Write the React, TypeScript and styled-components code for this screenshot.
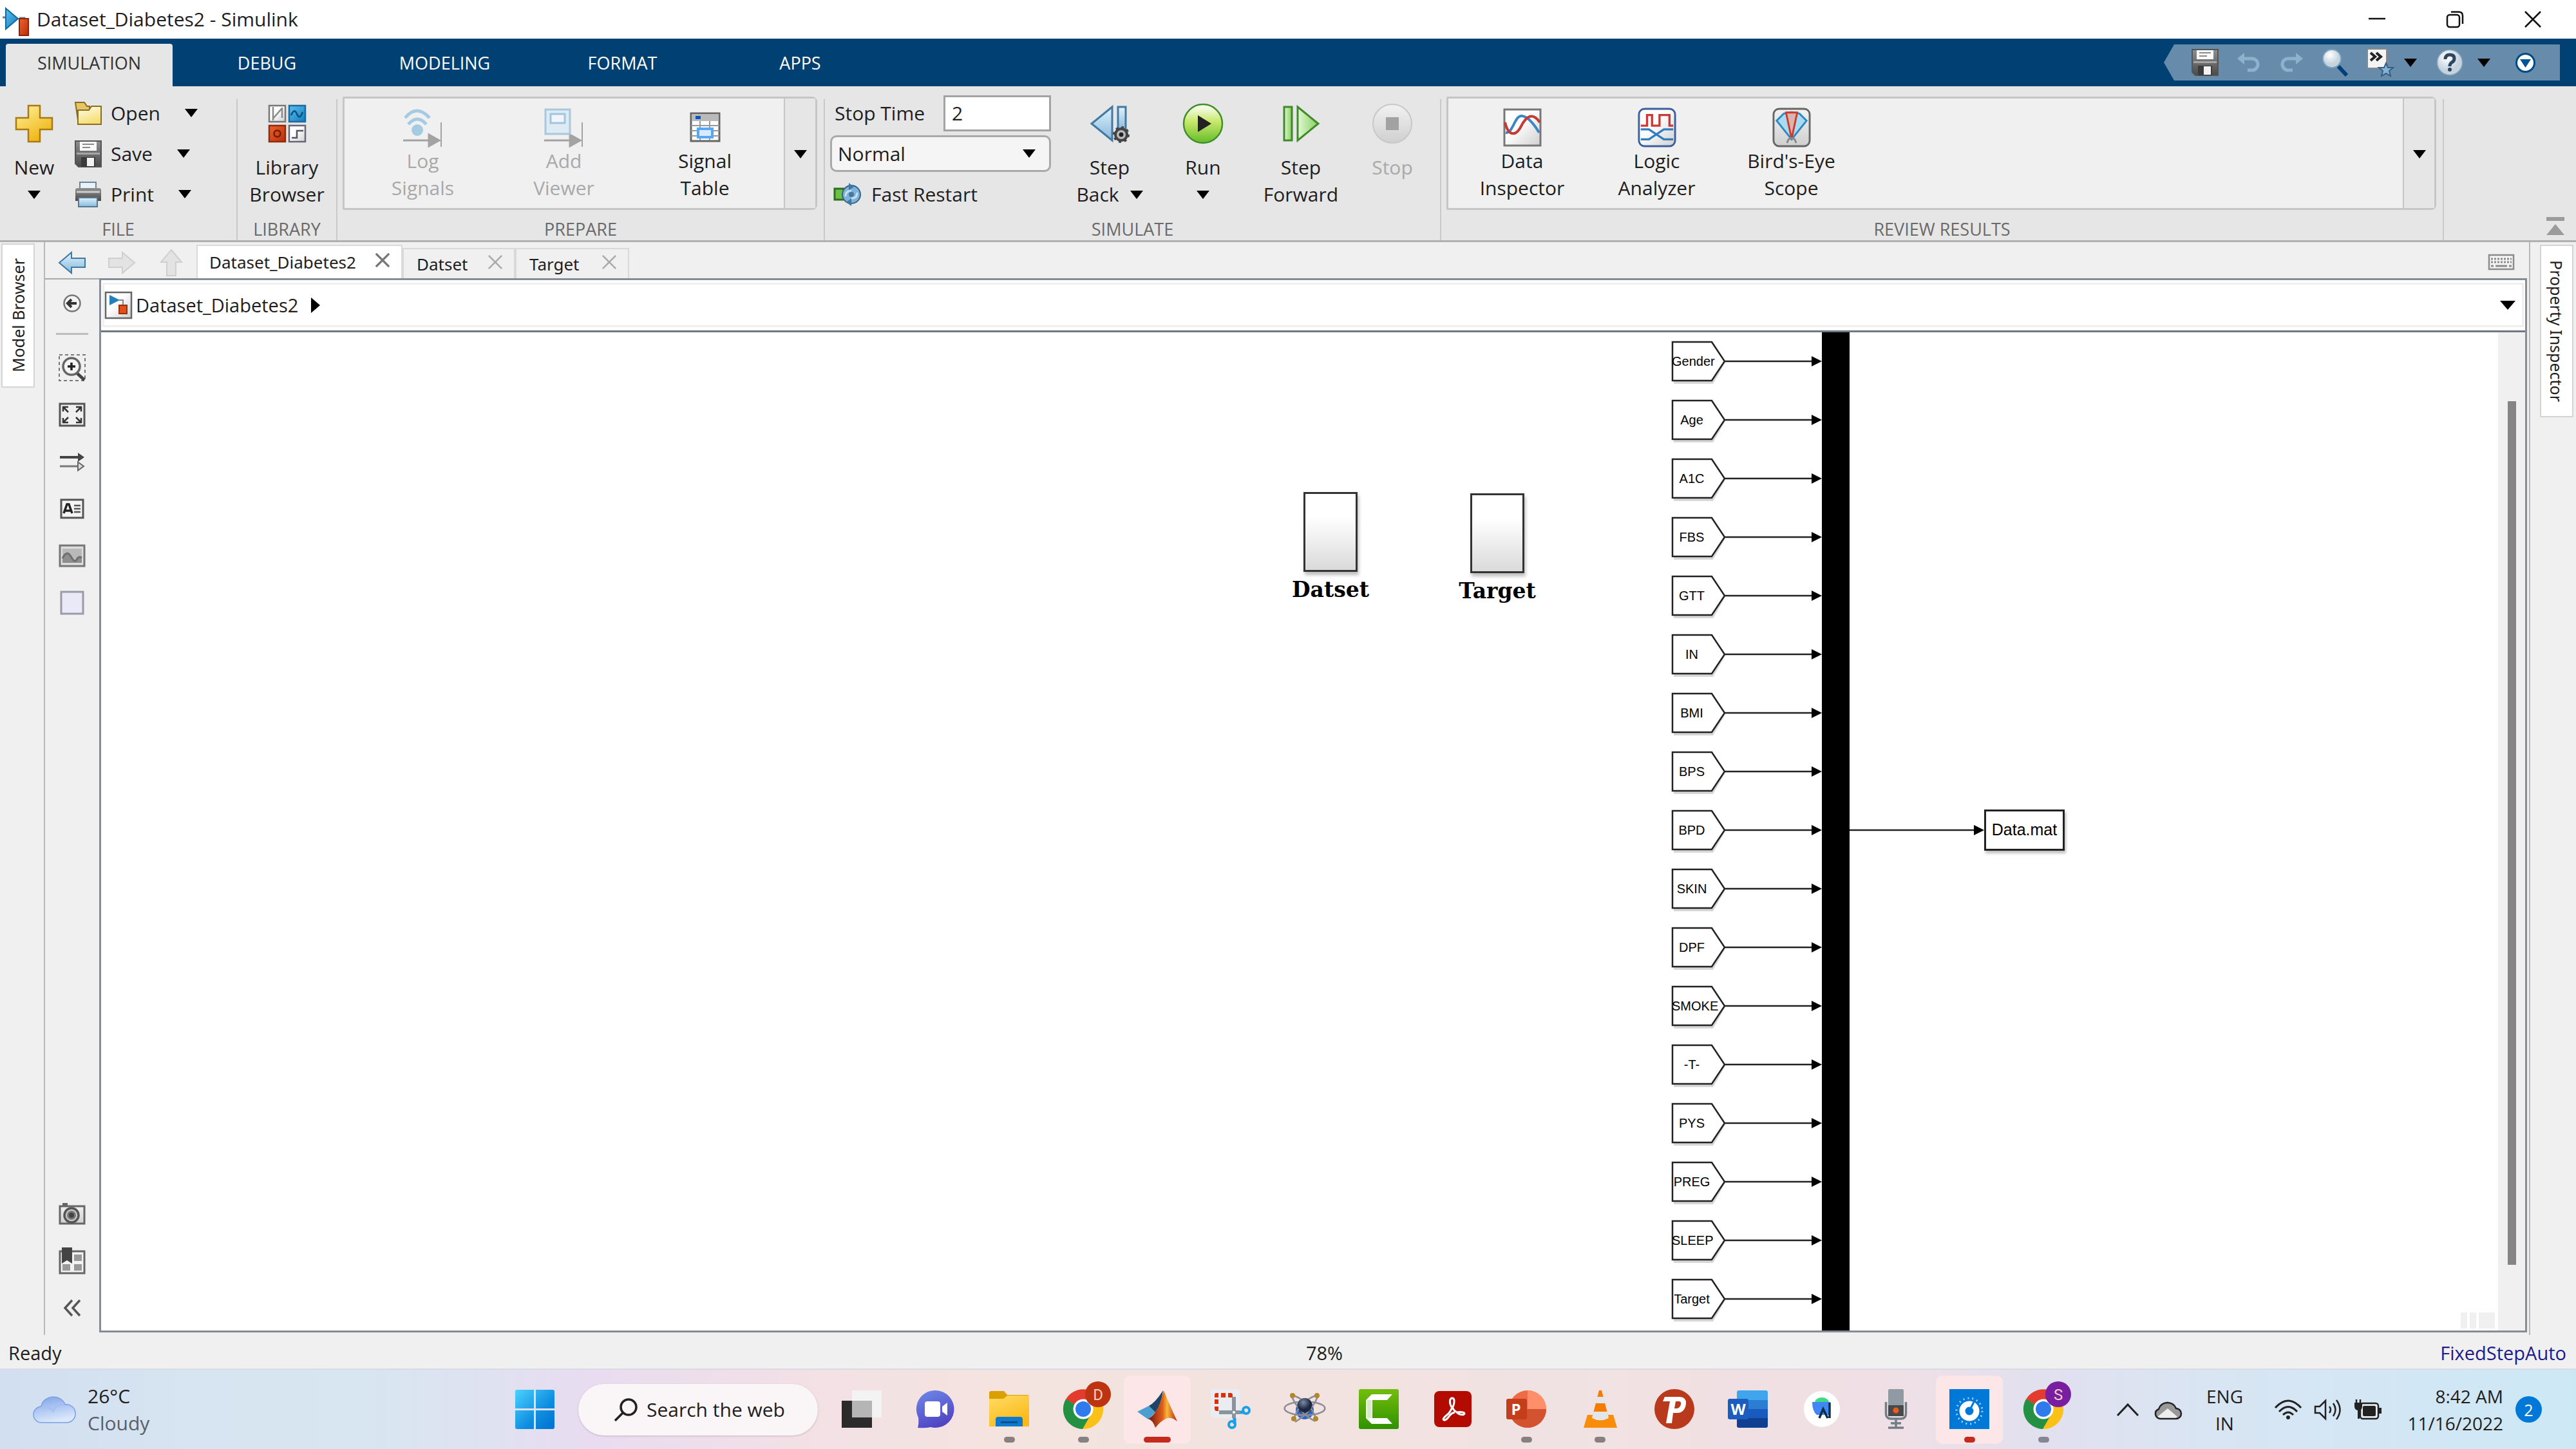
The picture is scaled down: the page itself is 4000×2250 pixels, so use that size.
import React from "react";
import styled, { createGlobalStyle, css } from "styled-components";

const UI = `"Open Sans", "Noto Sans", sans-serif`;
const TABS = `"Noto Sans", "Open Sans", sans-serif`;

const Global = createGlobalStyle`
  *, *::before, *::after { box-sizing: border-box; }
  body { margin: 0; background: #f0f0f0; font-family: ${UI}; font-size: 30px; color: #1e1e1e; }
  button, input, select { font: inherit; color: inherit; }
  button { background: none; border: 0; padding: 0; margin: 0; white-space: nowrap; }
  svg { display: block; flex: none; overflow: visible; }
`;

/* ---------- shell ---------- */

const Page = styled.div`
  display: flex;
  flex-direction: column;
  min-height: 100vh;
`;

const TitleBar = styled.header`
  display: flex;
  align-items: center;
  height: 60px;
  padding: 0 54px 0 4px;
  background: #fff;
`;

const AppTitle = styled.h1`
  flex: 1;
  margin: 0 0 0 11px;
  font-size: 30px;
  font-weight: 400;
  line-height: 40px;
`;

const WindowButtons = styled.div`
  display: flex;
  gap: 95px;
`;

const MenuBar = styled.nav`
  display: flex;
  align-items: flex-end;
  height: 74px;
  padding: 0 25px 0 9px;
  background: #004073;
`;

const MenuTabs = styled.div`
  display: flex;
  flex: 1;
  gap: 17px;
`;

const MenuTab = styled.button<{ $active?: boolean }>`
  width: 259px;
  height: 66px;
  padding-bottom: 8px;
  border-radius: 4px 4px 0 0;
  font-size: 27px;
  color: ${(p) => (p.$active ? "#333" : "#fff")};
  background: ${(p) => (p.$active ? "#e6e6e6" : "transparent")};
`;

const QuickAccess = styled.div`
  display: flex;
  align-items: center;
  align-self: center;
  height: 56px;
  padding: 0 37px 0 43px;
  background: #678cab;
  clip-path: polygon(16px 0, 100% 0, 100% 100%, 16px 100%, 0 50%);
`;

const QuickItem = styled.button<{ $gap: number }>`
  margin-right: ${(p) => p.$gap}px;
`;

/* ---------- ribbon ---------- */

const Ribbon = styled.section`
  display: flex;
  height: 242px;
  padding-top: 10px;
  background: #e6e6e6;
  border-bottom: 3px solid #b0b0b0;
`;

const Section = styled.div<{ $width?: number }>`
  display: flex;
  flex-direction: column;
  ${(p) => (p.$width ? css`width: ${p.$width}px; flex: none;` : css`flex: 1;`)}
`;

const SectionBody = styled.div`
  display: flex;
  height: 189px;
`;

const SectionLabel = styled.div`
  margin-top: 8px;
  line-height: 30px;
  font-size: 27px;
  text-align: center;
  color: #6a6a6a;
`;

const Separator = styled.div`
  flex: none;
  width: 2px;
  margin-top: 10px;
  background: #c9c9c9;
`;

const BigButton = styled.button<{ $width: number; $faded?: boolean; $inGallery?: boolean }>`
  display: flex;
  flex-direction: column;
  align-items: center;
  justify-content: flex-start;
  width: ${(p) => p.$width}px;
  flex: none;
  line-height: 42px;
  padding-top: ${(p) => (p.$inGallery ? 15 : 18)}px;
  color: ${(p) => (p.$faded ? "#a9a9a9" : "#1e1e1e")};
  & > svg { margin-bottom: ${(p) => (p.$inGallery ? 1 : 17)}px; }
`;

const ButtonLine = styled.span`
  display: flex;
  align-items: center;
  justify-content: center;
  gap: 17px;
  height: 42px;
`;

const Stack = styled.div`
  display: grid;
  grid-template-rows: repeat(3, 63px);
`;

const FileList = styled(Stack)`
  margin-left: 10px;
`;

const FileButton = styled.button`
  display: flex;
  align-items: center;
  & > span { margin: 0 38px 0 14px; }
`;

const Gallery = styled.div`
  display: flex;
  flex: 1;
  height: 176px;
  margin: 6px 10px 0 8px;
  border: 3px solid #c6c6c6;
  border-radius: 2px 8px 8px 2px;
  background: #f0f0f0;
`;

const GalleryItems = styled.div<{ $pad: number }>`
  display: flex;
  flex: 1;
  padding-left: ${(p) => p.$pad}px;
`;

const GalleryMore = styled.button`
  display: grid;
  place-items: center;
  width: 49px;
  padding-top: 3px;
  border-left: 2px solid #c6c6c6;
  background: #e6e6e6;
`;

const SimForm = styled(Stack)`
  width: 343px;
  margin: 0 14px 0 8px;
  align-items: center;
`;

const StopTimeRow = styled.div`
  display: flex;
  align-items: center;
  justify-content: space-between;
  padding-left: 7px;
`;

const StopInput = styled.input`
  width: 167px;
  height: 56px;
  padding: 0 10px;
  border: 3px solid #a3a3a3;
  border-radius: 0;
  background: #fff;
  outline: 0;
`;

const SelectBox = styled.div`
  display: grid;
  align-items: center;
  & > * { grid-area: 1 / 1; }
  & > svg { justify-self: end; margin-right: 24px; pointer-events: none; }
`;

const ModeSelect = styled.select`
  appearance: none;
  height: 57px;
  padding: 0 9px;
  border: 3px solid #a9a9a9;
  border-radius: 10px;
  background: #f5f5f5;
`;

const FastRestart = styled.button`
  display: flex;
  align-items: center;
  gap: 16px;
  padding-left: 6px;
`;

const RibbonEnd = styled.div`
  display: flex;
  align-items: flex-end;
  justify-content: flex-end;
  width: 205px;
  padding: 0 18px 7px 0;
`;

/* ---------- workspace ---------- */

const Workspace = styled.main`
  display: flex;
  flex: 1;
  background: #f0f0f0;
`;

const LeftRail = styled.aside`
  width: 70px;
  padding: 2px 0 0 2px;
  border-right: 2px solid #b9b9b9;
`;

const RightRail = styled.aside`
  width: 73px;
  padding: 4px 0 0 15px;
  border-left: 2px solid #b9b9b9;
`;

const SideTab = styled.button<{ $flip?: boolean; $length: number }>`
  width: 52px;
  height: ${(p) => p.$length}px;
  border: 2px solid #d4d4d4;
  background: #fff;
  font-family: ${TABS};
  font-size: 25px;
  line-height: 34px;
  writing-mode: vertical-rl;
  transform: ${(p) => (p.$flip ? "rotate(180deg)" : "none")};
`;

const Center = styled.div`
  display: flex;
  flex-direction: column;
  flex: 1;
  min-width: 0;
`;

const DocBar = styled.div`
  display: flex;
  align-items: flex-end;
  height: 56px;
  padding-right: 23px;
`;

const NavButtons = styled.div`
  display: flex;
  align-self: center;
  align-items: center;
  gap: 35px;
  width: 235px;
  padding: 8px 0 0 21px;
`;

const DocTab = styled.div<{ $active?: boolean; $width: number }>`
  display: flex;
  align-items: center;
  justify-content: space-between;
  width: ${(p) => p.$width}px;
  height: ${(p) => (p.$active ? 52 : 47)}px;
  padding: ${(p) => (p.$active ? "0 18px 0 18px" : "0 18px 0 20px")};
  border: 2px solid #d9d9d9;
  border-bottom: 0;
  background: ${(p) => (p.$active ? "#fff" : "#f0f0f0")};
  font-family: ${TABS};
  font-size: 26px;
  & > button:last-child { margin-bottom: 6px; }
`;

const DocFill = styled.div`
  flex: 1;
`;

const KeyboardButton = styled.button`
  align-self: center;
  margin-top: 6px;
`;

const EditorRow = styled.div`
  display: flex;
  flex: 1;
`;

const Palette = styled.div`
  display: flex;
  flex-direction: column;
  align-items: center;
  width: 84px;
  padding-bottom: 6px;
  border-top: 2px solid #a8a8a8;
`;

const PaletteButton = styled.button`
  display: grid;
  place-items: center;
  width: 56px;
  height: 73px;
`;

const PaletteRule = styled.div`
  width: 50px;
  height: 3px;
  margin: 10px 0 14px;
  background: #bdbdbd;
`;

const PaletteGap = styled.div`
  flex: 1;
`;

const Editor = styled.div`
  display: flex;
  flex-direction: column;
  flex: 1;
  margin: 0 3px 4px 0;
  border: 3px solid #868d97;
  background: #fff;
`;

const Crumbs = styled.div`
  display: flex;
  align-items: center;
  height: 81px;
  padding: 4px 2px 5px;
  border-bottom: 3px solid #6f7884;
`;

const CrumbInner = styled.div`
  display: flex;
  align-items: center;
  flex: 1;
  height: 69px;
  padding: 0 10px 0 1px;
  border: 3px solid #efefef;
`;

const CrumbName = styled.button`
  margin: 0 20px 0 6px;
  font-size: 29px;
`;

const CanvasRow = styled.div`
  display: flex;
  flex: 1;
`;

const Canvas = styled.div`
  position: relative;
  flex: 1;
  overflow: hidden;
  background: #fff;
`;

const ScrollTrack = styled.div`
  display: flex;
  justify-content: center;
  width: 42px;
  padding: 107px 0 102px;
  background: #f0f0f0;
`;

const ScrollThumb = styled.div`
  width: 13px;
  background: #858585;
`;

const CanvasCorner = styled.div`
  position: absolute;
  right: 5px;
  bottom: 3px;
  display: flex;
  gap: 4px;
  height: 25px;
`;

const CornerBar = styled.div<{ $width: number }>`
  width: ${(p) => p.$width}px;
  background: #f0f0f0;
`;

/* ---------- diagram nodes ---------- */

const Subsystem = styled.div<{ $x: number; $y: number }>`
  position: absolute;
  left: ${(p) => p.$x}px;
  top: ${(p) => p.$y}px;
  display: flex;
  flex-direction: column;
  align-items: center;
  width: 144px;
  font: bold 33px/40px "DejaVu Serif", serif;
  color: #000;
`;

const SubsystemBox = styled.div`
  width: 84px;
  height: 124px;
  margin-bottom: 8px;
  border: 3px solid #333;
  background: linear-gradient(#fff 30%, #dadada);
  box-shadow: 2px 5px 5px rgba(0, 0, 0, 0.25);
`;

const FromColumn = styled.div`
  position: absolute;
  left: 2439px;
  top: 14px;
  display: flex;
  flex-direction: column;
  gap: 29px;
`;

const FromRow = styled.div`
  display: flex;
  align-items: center;
  height: 62px;
`;

const Tag = styled.div`
  display: grid;
  align-items: center;
  width: 83px;
  font: 20px/24px "Liberation Sans", Arial, sans-serif;
  color: #000;
  & > * { grid-area: 1 / 1; }
  & > span { justify-self: start; min-width: 62px; text-align: center; white-space: nowrap; }
`;

const Mux = styled.div`
  position: absolute;
  left: 2672px;
  top: 0;
  bottom: 0;
  width: 43px;
  background: #000;
`;

const Output = styled.div`
  position: absolute;
  left: 2715px;
  top: 741px;
  display: flex;
  align-items: center;
`;

const FileBlock = styled.div`
  width: 125px;
  height: 64px;
  border: 3px solid #222;
  background: #fff;
  box-shadow: 2px 4px 4px rgba(0, 0, 0, 0.25);
  font: 25px/56px "Liberation Sans", Arial, sans-serif;
  text-align: center;
  color: #000;
`;

/* ---------- bottom bars ---------- */

const StatusBar = styled.footer`
  display: grid;
  grid-template-columns: 1fr auto 1fr;
  align-items: center;
  height: 52px;
  padding: 2px 15px 0 13px;
  font-size: 29px;
  & > span:nth-child(2) { margin-left: 115px; }
`;

const SolverLink = styled.a`
  justify-self: end;
  color: #1c1c8c;
  text-decoration: none;
`;

const Taskbar = styled.footer`
  display: flex;
  align-items: center;
  height: 125px;
  padding: 0 53px;
  border-top: 2px solid #d9dbe4;
  background: linear-gradient(90deg, #d2dff0 0, #d7e4f1 8%, #d7e6f1 14%, #dfe2f0 19%, #e9dcf0 23%, #f2e0e6 31%, #f4e3df 38%, #f3e3df 46%, #f0e2e2 60%, #f1e0e3 68%, #efe0e6 74%, #e2e0ef 79%, #d8e5f3 86%, #cde8f5 100%);
`;

const Weather = styled.button`
  display: flex;
  align-items: center;
  gap: 19px;
  flex: none;
  width: 747px;
  text-align: left;
  line-height: 42px;
`;

const Muted = styled.span`
  color: #5b6068;
`;

const Lines = styled.span<{ $align?: string }>`
  display: flex;
  flex-direction: column;
  align-items: ${(p) => p.$align ?? "flex-start"};
`;

const SearchPill = styled.button`
  display: flex;
  align-items: center;
  gap: 14px;
  flex: none;
  width: 372px;
  height: 80px;
  margin: 0 16px 0 37px;
  padding-left: 56px;
  border-radius: 40px;
  background: #faf6f8;
  box-shadow: 0 1px 3px rgba(120, 90, 110, 0.3);
`;

const Dock = styled.div`
  display: flex;
  justify-content: space-between;
  flex: 1;
`;

const DockItem = styled.button<{ $lit?: boolean }>`
  display: grid;
  grid-template-rows: 86px 9px;
  place-items: center;
  align-content: start;
  width: 104px;
  height: 106px;
  padding-top: 9px;
  border-radius: 10px;
  background: ${(p) => (p.$lit ? "#fde6e8" : "transparent")};
`;

const Indicator = styled.span<{ $color: string; $wide?: boolean }>`
  width: ${(p) => (p.$wide ? 42 : 17)}px;
  height: 9px;
  border-radius: 5px;
  background: ${(p) => p.$color};
`;

const Tray = styled.div`
  display: flex;
  align-items: center;
  flex: none;
  width: 722px;
  padding-left: 62px;
  font-size: 28px;
  line-height: 42px;
`;

const TrayButton = styled.button<{ $left: number }>`
  display: flex;
  align-items: center;
  margin-left: ${(p) => p.$left}px;
`;

const Clock = styled(TrayButton)`
  flex: 1;
  justify-content: flex-end;
  gap: 19px;
`;

const Count = styled.span`
  display: grid;
  place-items: center;
  width: 41px;
  height: 41px;
  border-radius: 50%;
  background: #0078d7;
  color: #fff;
  font-size: 25px;
`;

/* ---------- icons ---------- */

const Arrow = ({ w = 20, h = 13, fill = "#000" }: { w?: number; h?: number; fill?: string }) => (
  <svg width={w} height={h} viewBox="0 0 20 13" preserveAspectRatio="none"><path d="M0 0h20L10 13z" fill={fill} /></svg>
);

const HiddenDefs = styled.svg`
  position: absolute;
`;

const Defs = () => (
  <HiddenDefs width="0" height="0" aria-hidden="true">
    <defs>
      <linearGradient id="gold" x2="0.6" y2="1"><stop stopColor="#fff3a0" /><stop offset="1" stopColor="#eeb411" /></linearGradient>
      <linearGradient id="folder" x2="0.4" y2="1"><stop stopColor="#fffdf0" /><stop offset="1" stopColor="#f5df72" /></linearGradient>
      <linearGradient id="steel" x2="0" y2="1"><stop stopColor="#8f8f8f" /><stop offset="1" stopColor="#4a4a4a" /></linearGradient>
      <linearGradient id="paper" x2="1" y2="1"><stop offset=".4" stopColor="#fff" /><stop offset="1" stopColor="#cfcfcf" /></linearGradient>
      <linearGradient id="blue" x2="1" y2="1"><stop stopColor="#5cc0ee" /><stop offset="1" stopColor="#117bbd" /></linearGradient>
      <linearGradient id="red" x2="1" y2="1"><stop stopColor="#f0612e" /><stop offset="1" stopColor="#b82f08" /></linearGradient>
      <linearGradient id="sky" x2="0" y2="1"><stop stopColor="#e0f2fc" /><stop offset="1" stopColor="#86b9dc" /></linearGradient>
      <linearGradient id="run" x2="0" y2="1"><stop stopColor="#fff" /><stop offset=".45" stopColor="#c8e86a" /><stop offset="1" stopColor="#63bb2a" /></linearGradient>
      <linearGradient id="leaf" x2="1" y2="0"><stop stopColor="#e2f7d4" /><stop offset="1" stopColor="#85d05c" /></linearGradient>
      <linearGradient id="pale" x2="0" y2="1"><stop stopColor="#f2f2f2" /><stop offset="1" stopColor="#cfcfcf" /></linearGradient>
      <linearGradient id="win" x2="1" y2="1"><stop stopColor="#4cd2ff" /><stop offset=".6" stopColor="#0f8ee0" /><stop offset="1" stopColor="#0070d0" /></linearGradient>
      <linearGradient id="cloud" x2="0.3" y2="1"><stop stopColor="#7da2ea" /><stop offset="1" stopColor="#dbe8fb" /></linearGradient>
      <linearGradient id="chat" x2="0.4" y2="1"><stop stopColor="#6f8be8" /><stop offset="1" stopColor="#5146c4" /></linearGradient>
      <linearGradient id="fold" x2="0.6" y2="1"><stop stopColor="#ffdc66" /><stop offset="1" stopColor="#fbb917" /></linearGradient>
      <linearGradient id="cam" x2="0" y2="1"><stop stopColor="#74bd0c" /><stop offset="1" stopColor="#2f9200" /></linearGradient>
      <linearGradient id="mat" x2="1" y2="0"><stop stopColor="#6d1410" /><stop offset=".5" stopColor="#e2601c" /><stop offset=".65" stopColor="#f6b83a" /><stop offset="1" stopColor="#b8230f" /></linearGradient>
      <radialGradient id="ball" cx=".4" cy=".3"><stop stopColor="#fff" /><stop offset="1" stopColor="#c5d3df" /></radialGradient>
      <radialGradient id="atomball" cx=".4" cy=".3"><stop stopColor="#7c8ba8" /><stop offset="1" stopColor="#1c2740" /></radialGradient>
    </defs>
  </HiddenDefs>
);

const SimulinkMark = () => (
  <svg width="42" height="54" viewBox="0 0 42 54"><path d="M0 24h8M26 25h8v17" stroke="#777" strokeWidth="3" fill="none" /><path d="M5 10l19 16L5 42z" fill="url(#blue)" stroke="#1468a0" strokeWidth="2" /><path d="M26 44h14v26H26z" transform="translate(0 -18)" fill="url(#red)" stroke="#8c2408" strokeWidth="2" transform-origin="0 0" /></svg>
);
const Minimize = () => <svg width="26" height="26" viewBox="0 0 26 26"><path d="M0 12h26" stroke="#111" strokeWidth="2.5" /></svg>;
const Restore = () => <svg width="26" height="26" viewBox="0 0 26 26" fill="none" stroke="#111" strokeWidth="2.5"><rect x="1" y="6" width="19" height="19" rx="4" /><path d="M7 1.500h12q6 0 6 6V20" /></svg>;
const Close = ({ size = 26, color = "#111", sw = 2.5 }) => <svg width={size} height={size} viewBox="0 0 26 26"><path d="M1 1l24 24M25 1L1 25" stroke={color} strokeWidth={sw} /></svg>;
const Floppy = () => (
  <svg width="42" height="42" viewBox="0 0 42 42"><path d="M1 1h40v40H6l-5-5z" fill="url(#steel)" stroke="#555" strokeWidth="2" /><path d="M8 2h26v14H8z" fill="#fafafa" /><path d="M12 6h18M12 11h12" stroke="#8a8a8a" strokeWidth="2" /><path d="M10 26h22v15H10z" fill="#3b3b3b" /><path d="M19 27h11v13H19z" fill="#f2f2f2" /><path d="M3 19h36v3H3z" fill="#a5a5a5" /></svg>
);
const Undo = ({ flip = false }) => (
  <svg width="38" height="34" viewBox="0 0 38 34"><g transform={flip ? "translate(38 0) scale(-1 1)" : undefined}><path d="M8 11h16a9 9 0 0 1 0 18h-7" fill="none" stroke="#8fb2cc" strokeWidth="5" /><path d="M1 11L12 2v18z" fill="#8fb2cc" /></g></svg>
);
const Magnifier = () => <svg width="42" height="44" viewBox="0 0 42 44"><path d="M26 28l13 14" stroke="#003f78" strokeWidth="6" /><circle cx="16" cy="16" r="14" fill="url(#ball)" stroke="#7fa2bd" strokeWidth="2" /></svg>;
const Favorites = () => (
  <svg width="42" height="44" viewBox="0 0 42 44"><path d="M1 1h30v30H1z" fill="#f4f4f4" stroke="#888" strokeWidth="2" /><path d="M6 7l7 6-7 6M15 7l7 6-7 6" fill="none" stroke="#222" strokeWidth="4" /><path d="M30 23l3 7h8l-6 5 2 8-7-4-7 4 2-8-6-5h8z" fill="#7fb3d8" stroke="#385d7e" strokeWidth="2" /></svg>
);
const Help = () => (
  <svg width="42" height="42" viewBox="0 0 42 42"><circle cx="21" cy="21" r="19.500" fill="url(#ball)" stroke="#8aa4b8" strokeWidth="1.500" /><path d="M14 16q0-7 7-7t7 6q0 4-4 6-3 2-3 6" fill="none" stroke="#2d4560" strokeWidth="5" /><circle cx="21" cy="32" r="3" fill="#2d4560" /></svg>
);
const CircleDown = () => <svg width="33" height="33" viewBox="0 0 33 33"><circle cx="16.500" cy="16.500" r="14" fill="#fff" stroke="#004b85" strokeWidth="3" /><path d="M8 11h17l-8.500 13z" fill="#00559a" /></svg>;

const Plus = () => <svg width="60" height="60" viewBox="0 0 60 60"><path d="M21 2h18v19h19v18H39v19H21V39H2V21h19z" fill="url(#gold)" stroke="#a97912" strokeWidth="2.500" /></svg>;
const Folder = () => <svg width="42" height="38" viewBox="0 0 42 38"><path d="M1 2h14l4 6h4v6H6v22z" fill="#e5c564" stroke="#8c6d1e" strokeWidth="2" /><path d="M5 36V14h17l4-6h15v28z" fill="url(#folder)" stroke="#8c6d1e" strokeWidth="2" /></svg>;
const Printer = () => (
  <svg width="42" height="42" viewBox="0 0 42 42"><path d="M8 2h25v14H8z" fill="#e9f2fa" stroke="#6e8598" strokeWidth="2" /><path d="M1 14q0-3 4-3h32q4 0 4 3v17H1z" fill="url(#steel)" /><path d="M3 17h36" stroke="#ccc" strokeWidth="3" /><path d="M6 26h29v14H6z" fill="url(#sky)" stroke="#587690" strokeWidth="2" /></svg>
);
const Library = () => (
  <svg width="60" height="60" viewBox="0 0 60 60" strokeWidth="2.500"><path d="M2 2h25v25H2z" fill="url(#paper)" stroke="#777" /><path d="M33 2h25v25H33z" fill="url(#blue)" stroke="#1a6a9c" /><path d="M2 33h25v25H2z" fill="url(#red)" stroke="#922b0a" /><path d="M33 33h25v25H33z" fill="url(#paper)" stroke="#667" /><path d="M8 4v21M8 22L22 6M22 5v16" stroke="#8a8a8a" fill="none" /><path d="M36 17q5-12 9-2t9-3" stroke="#0b507c" fill="none" /><circle cx="14.500" cy="45.500" r="5" fill="none" stroke="#711d04" /><path d="M37 52h8V41h10" fill="none" stroke="#556" /></svg>
);
const SinkArrow = () => <g fill="#a3a3a3" stroke="#a3a3a3" strokeWidth="3"><path d="M0 50h42" /><path d="M40 41l16 9-16 9z" /><path d="M59 22v38" strokeWidth="2" /></g>;
const LogSignals = () => <svg width="62" height="60" viewBox="0 0 62 60"><SinkArrow /><g fill="none" stroke="#a5cbe2" strokeWidth="5"><path d="M3 15q18-22 38 0" /><path d="M8 25q14-16 28 0" /></g><circle cx="22" cy="34" r="9" fill="#a5cbe2" /></svg>;
const AddViewer = () => <svg width="62" height="60" viewBox="0 0 62 60"><SinkArrow /><path d="M2 2h38v38H2z" fill="#deebf4" stroke="#a9c7dc" strokeWidth="3" /><path d="M10 9h22v14H10z" fill="#f0f6fb" stroke="#9fc5e0" strokeWidth="3" /></svg>;
const SignalTable = () => (
  <svg width="48" height="60" viewBox="0 0 48 60"><path d="M2 8h44v43H2z" fill="#fff" stroke="#666" strokeWidth="3" /><path d="M3 9h42v11H3z" fill="#b9b9b9" /><path d="M9 12h8v5H9z" fill="#0b55c2" /><path d="M2 27h44M2 35h44M2 43h44M16 20v30M31 20v30" stroke="#999" strokeWidth="2" /><path d="M13 32h22v13H13z" fill="#d9ecff" stroke="#56a8f7" strokeWidth="4" /></svg>
);
const Restart = () => (
  <svg width="42" height="34" viewBox="0 0 42 34"><path d="M1 8h14v17H1z" fill="#6cc04a" stroke="#2d6e1c" strokeWidth="3" /><circle cx="27" cy="17" r="14" fill="#7fb2d6" stroke="#34648a" strokeWidth="2" /><path d="M23-1l8 6-8 6zM27 35l-8-6 8-6z" fill="#3c79a8" /><path d="M18 20q0-9 9-9M36 14q0 9-9 9" fill="none" stroke="#c3e0f2" strokeWidth="3" /><circle cx="27" cy="17" r="4" fill="#46789e" /></svg>
);
const StepBack = () => (
  <svg width="60" height="60" viewBox="0 0 60 60"><path d="M34 4v52L2 30z" fill="url(#sky)" stroke="#4179a3" strokeWidth="3" /><path d="M43 4h12v36H43z" fill="url(#sky)" stroke="#4179a3" strokeWidth="3" /><circle cx="48" cy="47" r="9" fill="#bbb" stroke="#444" strokeWidth="4" /><circle cx="48" cy="47" r="11.500" fill="none" stroke="#444" strokeWidth="3" strokeDasharray="4 5" /><circle cx="48" cy="47" r="3.500" fill="#222" /></svg>
);
const Run = () => <svg width="62" height="60" viewBox="0 0 62 60"><circle cx="31" cy="30" r="30" fill="url(#run)" stroke="#3f8f2a" strokeWidth="2.500" /><path d="M23 17l21 13-21 13z" fill="#222" /></svg>;
const StepForward = () => <svg width="60" height="60" viewBox="0 0 60 60"><g fill="url(#leaf)" stroke="#418a2c" strokeWidth="3"><path d="M4 4h12v52H4z" /><path d="M25 4v52l32-26z" /></g></svg>;
const Stop = () => <svg width="62" height="60" viewBox="0 0 62 60"><circle cx="31" cy="30" r="30" fill="url(#pale)" stroke="#c8c8c8" strokeWidth="2" /><path d="M21 20h20v20H21z" fill="#a2a2a2" /></svg>;
const DataInspector = () => <svg width="60" height="60" viewBox="0 0 60 60"><path d="M2 2h56v56H2z" fill="url(#paper)" stroke="#777" strokeWidth="3" /><path d="M4 38C15 40 18 11 29 12S50 28 56 38" fill="none" stroke="#3d85c4" strokeWidth="4" /><path d="M3 22C8 44 20 44 28 28S46 6 57 22" fill="none" stroke="#c63a34" strokeWidth="4" /></svg>;
const LogicAnalyzer = () => (
  <svg width="62" height="60" viewBox="0 0 62 62"><rect x="2" y="1" width="58" height="60" rx="9" fill="url(#paper)" stroke="#3d5f9c" strokeWidth="3" /><path d="M5 28h10V11h8v17h12V11h16v17h6" fill="none" stroke="#cc3a36" strokeWidth="3.500" /><path d="M5 34h13l24 16h15M5 50h13l24-16h15" fill="none" stroke="#2f7fc0" strokeWidth="3.500" /></svg>
);
const BirdsEye = () => (
  <svg width="62" height="60" viewBox="0 0 62 62"><rect x="2" y="1" width="58" height="60" rx="9" fill="url(#pale)" stroke="#666" strokeWidth="3" /><path d="M31 50L7 20 18 9q13-5 26 0l11 11z" fill="#a8dcf2" stroke="#2f88c0" strokeWidth="3" /><path d="M22 7h18l-9 42z" fill="#d9b5ac" stroke="#cf3a30" strokeWidth="3" /><path d="M24 56q1-8 7-8t7 8" fill="none" stroke="#888" strokeWidth="3" /></svg>
);
const Collapse = () => <svg width="28" height="30" viewBox="0 0 28 30"><path d="M0 1h28v6H0zM14 12l14 17H0z" fill="#9b9b9b" /></svg>;

const NavArrow = ({ turn, live = false }: { turn: number; live?: boolean }) => (
  <svg width="42" height="34" viewBox="0 0 42 34"><path d="M1 17L20 1v9h21v14H20v9z" transform={`rotate(${turn} 21 17)`} fill={live ? "url(#sky)" : "#e3e3e3"} stroke={live ? "#3f78a0" : "#cfcfcf"} strokeWidth="2" /></svg>
);
const Keyboard = () => <svg width="40" height="24" viewBox="0 0 40 24"><path d="M1 1h38v22H1z" fill="#f4f4f4" stroke="#8b8b8b" strokeWidth="2.500" /><path d="M4 7h32M4 12h32" stroke="#8b8b8b" strokeWidth="3" strokeDasharray="3 2" /><path d="M4 18h4M11 18h18M32 18h4" stroke="#8b8b8b" strokeWidth="3" /></svg>;
const ModelIcon = () => <svg width="42" height="42" viewBox="0 0 42 42"><path d="M1 1h40v40H1z" fill="url(#paper)" stroke="#666" strokeWidth="2.500" /><path d="M22 13h6v9" stroke="#888" strokeWidth="2" fill="none" /><path d="M7 5l16 8L7 21z" fill="#2380bd" /><path d="M22 21h12v13H22z" fill="#e0501c" stroke="#98300b" strokeWidth="2" /></svg>;
const HideBar = () => <svg width="28" height="28" viewBox="0 0 28 28"><circle cx="14" cy="14" r="12.500" fill="#f3f3f3" stroke="#777" strokeWidth="2.500" /><path d="M21 14H8M13 8l-6 6 6 6" fill="none" stroke="#333" strokeWidth="4" /></svg>;
const ZoomIn = () => (
  <svg width="42" height="42" viewBox="0 0 42 42"><path d="M1 1h40v40H1z" fill="none" stroke="#777" strokeWidth="2" strokeDasharray="5 4" /><path d="M28 29l12 11" stroke="#444" strokeWidth="5" /><circle cx="20" cy="19" r="13" fill="#f5f5f5" stroke="#666" strokeWidth="3.500" /><path d="M20 13v12M14 19h12" stroke="#222" strokeWidth="3.500" /></svg>
);
const Fit = () => (
  <svg width="42" height="38" viewBox="0 0 42 38"><path d="M2 2h38v34H2z" fill="#f0f0f0" stroke="#555" strokeWidth="3" /><g stroke="#333" strokeWidth="2.500" fill="none"><path d="M7 14V7h8M7 7l8 8M27 7h8v7M35 7l-8 8M7 24v7h8M7 31l8-8M27 31h8v-7M35 31l-8-8" /></g></svg>
);
const SignalLines = () => <svg width="38" height="28" viewBox="0 0 38 28"><path d="M0 7h31" stroke="#444" strokeWidth="4" /><path d="M0 21h31" stroke="#777" strokeWidth="3" /><path d="M28 0l10 7-10 7z" fill="#444" /><path d="M28 14.500l9 6.500-9 6.500z" fill="#ddd" stroke="#666" strokeWidth="2" /></svg>;
const Annotation = () => <svg width="38" height="32" viewBox="0 0 38 32"><path d="M2 2h34v28H2z" fill="#f4f4f4" stroke="#555" strokeWidth="3" /><path d="M6 23L11 9h3l5 14M8 19h9" fill="none" stroke="#222" strokeWidth="3.500" /><path d="M22 11h10M22 16h10M22 21h10" stroke="#555" strokeWidth="2.500" /></svg>;
const ImageIcon = () => <svg width="42" height="36" viewBox="0 0 42 36"><path d="M2 2h38v32H2z" fill="#ddd" stroke="#777" strokeWidth="3" /><path d="M6 7h30v22H6z" fill="#b9b9b9" /><path d="M6 22q7-14 13-3t9 5 8-3v8H6z" fill="#8e8e8e" /><path d="M6 22q7-14 13-3t9 5 8-3" fill="none" stroke="#6f6f6f" strokeWidth="3" /></svg>;
const Area = () => <svg width="38" height="38" viewBox="0 0 38 38"><path d="M2 2h34v34H2z" fill="#e9e9f8" stroke="#9a9aa8" strokeWidth="3" /></svg>;
const Camera = () => <svg width="42" height="34" viewBox="0 0 42 34"><path d="M2 5h38v27H2z" fill="url(#pale)" stroke="#666" strokeWidth="3" /><path d="M6 0h8v5H6z" fill="#666" /><circle cx="20" cy="19" r="11" fill="#c9c9c9" stroke="#555" strokeWidth="3.500" /><circle cx="20" cy="19" r="5.500" fill="#444" stroke="#777" strokeWidth="3" /></svg>;
const Bookmark = () => <svg width="42" height="42" viewBox="0 0 42 42"><path d="M2 6h38v34H2z" fill="#f2f2f2" stroke="#666" strokeWidth="3" /><path d="M24 11h12v10H24zM24 26h12v10H24zM6 26h12v10H6z" fill="#999" /><path d="M5 0h16v25l-8-5-8 5z" fill="#444" /></svg>;
const Chevrons = () => <svg width="28" height="26" viewBox="0 0 28 26" fill="none" stroke="#555" strokeWidth="3.500"><path d="M14 1L3 13l11 12M26 1L15 13l11 12" /></svg>;

const TagShape = () => <svg width="83" height="62" viewBox="0 0 83 62"><path d="M3 5h60l20 28-19 33H3z" fill="#000" opacity=".16" /><path d="M1 1h61l20 30-20 30H1z" fill="#fff" stroke="#222" strokeWidth="2.500" /></svg>;
const Wire = ({ length }: { length: number }) => <svg width={length} height="16" viewBox={`0 0 ${length} 16`}><path d={`M0 8h${length - 12}`} stroke="#222" strokeWidth="2.500" /><path d={`M${length - 16} 0l16 8-16 8z`} fill="#000" /></svg>;

/* ---------- taskbar icons ---------- */

const Cloud = () => <svg width="64" height="42" viewBox="0 0 64 42"><path d="M12 41a12 12 0 0 1-1-25 19 17 0 0 1 37-3 14 14 0 0 1 4 28z" fill="url(#cloud)" stroke="#7c9fe6" strokeWidth="1.500" /><path d="M12 19q10-4 18 4 3-10 16-10" fill="none" stroke="#a6c0f2" strokeWidth="3" /></svg>;
const Windows = () => <svg width="61" height="61" viewBox="0 0 61 61"><path d="M3 0h26v29H0V3q0-3 3-3zM32 0h26q3 0 3 3v26H32zM0 32h29v29H3q-3 0-3-3zM32 32h29v26q0 3-3 3H32z" fill="url(#win)" /></svg>;
const SearchGlass = () => <svg width="36" height="36" viewBox="0 0 36 36" fill="none" stroke="#222" strokeWidth="3.500"><circle cx="22" cy="14" r="12" /><path d="M13 23L1 35" /></svg>;
const TaskView = () => <svg width="62" height="60" viewBox="0 0 62 60"><path d="M0 17h47v42H0z" fill="#2b2b2b" /><path d="M16 1h46v42H16z" fill="#f3f3f3" /><path d="M16 17h31v26H16z" fill="#b5b5b5" /></svg>;
const Chat = () => <svg width="60" height="60" viewBox="0 0 60 60"><path d="M30 1a29 29 0 1 1-8 57q-8 2-20 1 2-6 1-16A29 29 0 0 1 30 1z" fill="url(#chat)" /><rect x="13" y="18" width="24" height="24" rx="4" fill="#fff" /><path d="M40 26l8-6v20l-8-6z" fill="#fff" /></svg>;
const Explorer = () => <svg width="62" height="56" viewBox="0 0 62 56"><path d="M0 3q0-3 3-3h20l5 6h31q3 0 3 3v10H0z" fill="#dba000" /><path d="M0 12h22l6-5h34v48H0z" fill="url(#fold)" /><path d="M10 55V44q0-4 4-4h34q4 0 4 4v11z" fill="#0f79cc" /><path d="M18 47h26v3H18z" fill="#06508f" /></svg>;
const Chrome = ({ letter, color }: { letter: string; color: string }) => (
  <svg width="62" height="62" viewBox="0 0 62 62"><path d="M31 31L4 16A31 31 0 0 1 58 16z" fill="#e33b2e" /><path d="M31 31h0L58 15.500A31 31 0 0 1 30 62z" fill="#fbc116" /><path d="M31 31l12 8-13 23A31 31 0 0 1 4 15.500z" fill="#249043" /><path d="M31 16h27" stroke="#e33b2e" strokeWidth="2" /><circle cx="31" cy="31" r="15.500" fill="#fff" /><circle cx="31" cy="31" r="12" fill="#2f7bed" /><circle cx="54" cy="8" r="20" fill={color} /><text x="54" y="17" textAnchor="middle" fontSize="24" fill="#f5cfc4" fontFamily="Roboto, sans-serif">{letter}</text></svg>
);
const Matlab = () => <svg width="62" height="58" viewBox="0 0 62 58"><path d="M0 33l18-9 10 10-11 11z" fill="#4b9fd0" /><path d="M18 24q10-5 22-24-2 20-12 34z" fill="#1c4668" /><path d="M17 44q16-8 24-44 8 20 21 48-10-8-18-4T28 58q-4-12-11-14z" fill="url(#mat)" /></svg>;
const Snip = () => (
  <svg width="62" height="62" viewBox="0 0 62 62"><rect width="45" height="45" rx="5" fill="#e9edf1" /><path d="M6 9q0-3 3-3h3v7H6zM16 6h7v7h-7zM27 6h4q3 0 3 3v4h-7zM6 16h6v7H6zM6 27h6v7H9q-3 0-3-4z" fill="#dd2f06" /><path d="M36 12v33M13 36h32" stroke="#8b949c" strokeWidth="6" /><g fill="none" stroke="#18a0ea" strokeWidth="4"><circle cx="55" cy="33" r="5" /><circle cx="33" cy="55" r="5" /><path d="M45 36h8M37 45v9" strokeWidth="5" /></g><circle cx="36" cy="36" r="2" fill="#fff" /></svg>
);
const Atom = () => (
  <svg width="62" height="50" viewBox="0 0 62 50" fill="none"><circle cx="31" cy="27" r="14" fill="#2f65c2" /><circle cx="31" cy="20" r="12" fill="url(#atomball)" /><g stroke="#8a8d96" strokeWidth="2.500"><path d="M20 14C-6 18-6 28 14 33M42 14c26 4 26 14 6 19M14 33q17 3 34 0" /><path d="M14 4Q40 14 49 41M48 4Q22 14 14 41M11 6q10 24 36 38M51 6Q41 30 16 45" /></g><circle cx="31" cy="19" r="11" fill="url(#atomball)" /><g fill="#b0872a"><circle cx="12" cy="4" r="4" /><circle cx="50" cy="4" r="4" /><circle cx="14" cy="40" r="4" /><circle cx="48" cy="40" r="4" /></g></svg>
);
const Camtasia = () => <svg width="62" height="62" viewBox="0 0 62 62"><rect width="62" height="62" rx="3" fill="url(#cam)" /><path d="M52 8H20l-9 9v28l9 9h32l-8-9H21V17h23z" fill="#fff" /><path d="M13 17h7v28h-7z" fill="#d6ecc4" /></svg>;
const Acrobat = () => <svg width="58" height="56" viewBox="0 0 58 56"><rect width="58" height="56" rx="8" fill="#b30b00" /><g fill="none" stroke="#fff" strokeWidth="3"><path d="M27 25c-4-7-3-14 1-14s4 7 1 14" /><path d="M28 25q-3 8-8 12c-5 4-7 7-5 8s6-2 9-7q3-4 8-5" /><path d="M28 25q2 5 7 8c8-1 12 0 12 2s-7 3-12-2" /></g></svg>;
const PowerPoint = () => <svg width="62" height="58" viewBox="0 0 62 58"><circle cx="33" cy="29" r="29" fill="#ed6c47" /><path d="M33 0a29 29 0 0 1 29 29H33z" fill="#ff8f6b" /><path d="M4 29h58a29 29 0 0 1-58 0z" fill="#d35230" /><rect y="13" width="32" height="32" rx="3" fill="#c43e1c" /><text x="15" y="38" textAnchor="middle" fontSize="24" fontWeight="700" fill="#fff" fontFamily="Open Sans">P</text></svg>;
const Vlc = () => <svg width="52" height="60" viewBox="0 0 52 60"><path d="M6 39h40l6 20H0z" fill="#f98c08" /><path d="M24 1h4l11 43q-13 7-26 0z" fill="#f47c00" /><path d="M21 11h10l3 10H18zM15 34h22l2 10q-13 7-26 0z" fill="#e2e6e8" /></svg>;
const PIcon = () => <svg width="62" height="62" viewBox="0 0 62 62"><circle cx="31" cy="31" r="31" fill="#b9391c" /><path d="M13 19l3-7h24q10 1 9 11-2 14-14 14h-6l-2 16h-9l6-34z" fill="#fff" /><path d="M33 19h6q3 1 2 5-2 6-7 6h-3z" fill="#b9391c" /></svg>;
const Word = () => <svg width="62" height="58" viewBox="0 0 62 58"><path d="M14 3q0-3 3-3h42q3 0 3 3v12H14z" fill="#41a5ee" /><path d="M14 15h48v14H14z" fill="#2b7cd3" /><path d="M14 29h48v14H14z" fill="#185abd" /><path d="M14 43h48v12q0 3-3 3H17q-3 0-3-3z" fill="#103f91" /><rect y="13" width="32" height="32" rx="3" fill="#1a5dbe" /><text x="16" y="38" textAnchor="middle" fontSize="24" fontWeight="700" fill="#fff" fontFamily="Open Sans">W</text></svg>;
const AndroidStudio = () => <svg width="56" height="56" viewBox="0 0 56 56"><circle cx="28" cy="28" r="28" fill="#fff" /><path d="M17 18a11 8 0 0 1 22 0z" fill="#3ddc84" /><path d="M13 17h28v20H20q-7-6-7-20z" fill="#4285f4" /><path d="M24 42l6-14 7 14M40 18v24" stroke="#0b3045" strokeWidth="3.500" fill="none" /></svg>;
const Mic = () => <svg width="34" height="62" viewBox="0 0 34 62"><rect x="5" y="0" width="24" height="26" rx="2" fill="#8f9aa3" /><path d="M1.500 20v18q0 8 8 8h15q8 0 8-8V20M17 46v14M5 60h24M9 53h16" fill="none" stroke="#727d86" strokeWidth="3.500" /><path d="M5 25h24v17H5z" fill="#474a4d" /><circle cx="17" cy="33" r="4.500" fill="#f05a1a" /></svg>;
const Gauge = () => <svg width="62" height="62" viewBox="0 0 62 62"><path d="M0 0h62v62H0z" fill="#0078d7" /><circle cx="31" cy="34" r="20" fill="none" stroke="#a9d3f5" strokeWidth="3" strokeDasharray="2 5" /><circle cx="31" cy="34" r="11" fill="none" stroke="#fff" strokeWidth="9" /><path d="M31 34l7-14" stroke="#0078d7" strokeWidth="3" /></svg>;
const ChevronUp = () => <svg width="34" height="20" viewBox="0 0 34 20"><path d="M1 19L17 2l16 17" fill="none" stroke="#222" strokeWidth="3" /></svg>;
const TrayCloud = () => <svg width="42" height="30" viewBox="0 0 42 30"><path d="M9 29a9 8 0 0 1-2-15 14 13 0 0 1 27-1 8 8 0 0 1 0 16z" fill="#999" /><path d="M5 26l16-13 15 13-4 3H9z" fill="#eee" /><path d="M9 29a9 8 0 0 1-2-15 14 13 0 0 1 27-1 8 8 0 0 1 0 16z" fill="none" stroke="#222" strokeWidth="2.500" /></svg>;
const Wifi = () => <svg width="42" height="32" viewBox="0 0 42 32" fill="none" stroke="#222" strokeWidth="3"><path d="M1 13q20-22 40 0M7 19q14-15 28 0M13 24q8-8 16 0" /><circle cx="21" cy="28" r="3" fill="#222" stroke="none" /></svg>;
const Speaker = () => <svg width="42" height="34" viewBox="0 0 42 34" fill="none" stroke="#222" strokeWidth="2.500"><path d="M1 12h7l9-9v28l-9-9H1zM23 12q4 5 0 10M29 7q7 10 0 20M34 2q11 15 0 30" /></svg>;
const Battery = () => <svg width="42" height="32" viewBox="0 0 42 32"><rect x="9" y="6" width="28" height="24" rx="4" fill="#e6edf4" stroke="#222" strokeWidth="2.500" /><rect x="13" y="10" width="20" height="16" rx="2" fill="#222" /><path d="M38 13h4v9h-4z" fill="#222" /><path d="M0 5h12v6q0 5-4 6v13H5V17q-5-1-5-6z" fill="#222" /><path d="M3 0v6M9 0v6" stroke="#222" strokeWidth="2.500" /></svg>;

/* ---------- data ---------- */

const tags = ["Gender", "Age", "A1C", "FBS", "GTT", "IN", "BMI", "BPS", "BPD", "SKIN", "DPF", "SMOKE", "-T-", "PYS", "PREG", "SLEEP", "Target"];

const dock: { name: string; icon: React.ReactNode; mark?: string; lit?: boolean; wide?: boolean }[] = [
  { name: "Task View", icon: <TaskView /> },
  { name: "Chat", icon: <Chat /> },
  { name: "File Explorer", icon: <Explorer />, mark: "#868080" },
  { name: "Chrome D", icon: <Chrome letter="D" color="#bd3410" />, mark: "#868080" },
  { name: "MATLAB", icon: <Matlab />, mark: "#c42b1c", lit: true, wide: true },
  { name: "Snip", icon: <Snip /> },
  { name: "Atom", icon: <Atom /> },
  { name: "Camtasia", icon: <Camtasia /> },
  { name: "Acrobat", icon: <Acrobat /> },
  { name: "PowerPoint", icon: <PowerPoint />, mark: "#868080" },
  { name: "VLC", icon: <Vlc />, mark: "#868080" },
  { name: "PicsArt", icon: <PIcon /> },
  { name: "Word", icon: <Word /> },
  { name: "Android Studio", icon: <AndroidStudio /> },
  { name: "Recorder", icon: <Mic /> },
  { name: "Capture", icon: <Gauge />, mark: "#c42b1c", lit: true },
  { name: "Chrome S", icon: <Chrome letter="S" color="#7a1ea1" />, mark: "#868690" },
];

const Labelled = ({ lines, arrow }: { lines: string[]; arrow?: boolean }) => (
  <>
    {lines.map((line, i) => (
      <ButtonLine key={line}>
        {line}
        {arrow && i === lines.length - 1 && i > 0 && <Arrow />}
      </ButtonLine>
    ))}
    {arrow && lines.length === 1 && <ButtonLine><Arrow /></ButtonLine>}
  </>
);

export default function App() {
  return (
    <Page>
      <Global />
      <Defs />
      <TitleBar>
        <SimulinkMark />
        <AppTitle>Dataset_Diabetes2 - Simulink</AppTitle>
        <WindowButtons>
          <button aria-label="Minimize"><Minimize /></button>
          <button aria-label="Restore"><Restore /></button>
          <button aria-label="Close"><Close /></button>
        </WindowButtons>
      </TitleBar>

      <MenuBar>
        <MenuTabs>
          <MenuTab $active>SIMULATION</MenuTab>
          <MenuTab>DEBUG</MenuTab>
          <MenuTab>MODELING</MenuTab>
          <MenuTab>FORMAT</MenuTab>
          <MenuTab>APPS</MenuTab>
        </MenuTabs>
        <QuickAccess>
          <QuickItem $gap={28} aria-label="Save"><Floppy /></QuickItem>
          <QuickItem $gap={28} aria-label="Undo"><Undo /></QuickItem>
          <QuickItem $gap={28} aria-label="Redo"><Undo flip /></QuickItem>
          <QuickItem $gap={28} aria-label="Find"><Magnifier /></QuickItem>
          <QuickItem $gap={16} aria-label="Favorites"><Favorites /></QuickItem>
          <QuickItem $gap={30} aria-label="More favorites"><Arrow /></QuickItem>
          <QuickItem $gap={22} aria-label="Help"><Help /></QuickItem>
          <QuickItem $gap={38} aria-label="More help"><Arrow /></QuickItem>
          <QuickItem $gap={0} aria-label="Options"><CircleDown /></QuickItem>
        </QuickAccess>
      </MenuBar>

      <Ribbon>
        <Section $width={367}>
          <SectionBody>
            <BigButton $width={106}><Plus /><Labelled lines={["New"]} arrow /></BigButton>
            <FileList>
              <FileButton><Folder /><span>Open</span><Arrow /></FileButton>
              <FileButton><Floppy /><span>Save</span><Arrow /></FileButton>
              <FileButton><Printer /><span>Print</span><Arrow /></FileButton>
            </FileList>
          </SectionBody>
          <SectionLabel>FILE</SectionLabel>
        </Section>
        <Separator />
        <Section $width={153}>
          <SectionBody>
            <BigButton $width={153}><Library /><Labelled lines={["Library", "Browser"]} /></BigButton>
          </SectionBody>
          <SectionLabel>LIBRARY</SectionLabel>
        </Section>
        <Separator />
        <Section $width={755}>
          <SectionBody>
            <Gallery>
              <GalleryItems $pad={12}>
                <BigButton $width={219} $inGallery $faded><LogSignals /><Labelled lines={["Log", "Signals"]} /></BigButton>
                <BigButton $width={219} $inGallery $faded><AddViewer /><Labelled lines={["Add", "Viewer"]} /></BigButton>
                <BigButton $width={219} $inGallery><SignalTable /><Labelled lines={["Signal", "Table"]} /></BigButton>
              </GalleryItems>
              <GalleryMore aria-label="More prepare tools"><Arrow /></GalleryMore>
            </Gallery>
          </SectionBody>
          <SectionLabel>PREPARE</SectionLabel>
        </Section>
        <Separator />
        <Section $width={955}>
          <SectionBody>
            <SimForm>
              <StopTimeRow>
                <label htmlFor="stop-time">Stop Time</label>
                <StopInput id="stop-time" defaultValue="2" />
              </StopTimeRow>
              <SelectBox>
                <ModeSelect aria-label="Simulation mode" defaultValue="Normal"><option>Normal</option></ModeSelect>
                <Arrow />
              </SelectBox>
              <FastRestart><Restart />Fast Restart</FastRestart>
            </SimForm>
            <BigButton $width={154}><StepBack /><Labelled lines={["Step", "Back"]} arrow /></BigButton>
            <BigButton $width={136}><Run /><Labelled lines={["Run"]} arrow /></BigButton>
            <BigButton $width={168}><StepForward /><Labelled lines={["Step", "Forward"]} /></BigButton>
            <BigButton $width={116} $faded><Stop /><Labelled lines={["Stop"]} /></BigButton>
          </SectionBody>
          <SectionLabel>SIMULATE</SectionLabel>
        </Section>
        <Separator />
        <Section>
          <SectionBody>
            <Gallery>
              <GalleryItems $pad={10}>
                <BigButton $width={209} $inGallery><DataInspector /><Labelled lines={["Data", "Inspector"]} /></BigButton>
                <BigButton $width={209} $inGallery><LogicAnalyzer /><Labelled lines={["Logic", "Analyzer"]} /></BigButton>
                <BigButton $width={209} $inGallery><BirdsEye /><Labelled lines={["Bird's-Eye", "Scope"]} /></BigButton>
              </GalleryItems>
              <GalleryMore aria-label="More review tools"><Arrow /></GalleryMore>
            </Gallery>
          </SectionBody>
          <SectionLabel>REVIEW RESULTS</SectionLabel>
        </Section>
        <Separator />
        <RibbonEnd><button aria-label="Collapse ribbon"><Collapse /></button></RibbonEnd>
      </Ribbon>

      <Workspace>
        <LeftRail><SideTab $flip $length={224}>Model Browser</SideTab></LeftRail>
        <Center>
          <DocBar>
            <NavButtons>
              <button aria-label="Back"><NavArrow turn={0} live /></button>
              <button aria-label="Forward"><NavArrow turn={180} /></button>
              <button aria-label="Up"><NavArrow turn={90} /></button>
            </NavButtons>
            <DocTab $active $width={320}><button>Dataset_Diabetes2</button><button aria-label="Close Dataset_Diabetes2"><Close size={22} color="#777" sw={4} /></button></DocTab>
            <DocTab $width={175}><button>Datset</button><button aria-label="Close Datset"><Close size={22} color="#aaa" sw={3} /></button></DocTab>
            <DocTab $width={177}><button>Target</button><button aria-label="Close Target"><Close size={22} color="#aaa" sw={3} /></button></DocTab>
            <DocFill />
            <KeyboardButton aria-label="Keyboard shortcuts"><Keyboard /></KeyboardButton>
          </DocBar>
          <EditorRow>
            <Palette>
              <PaletteButton aria-label="Hide bar"><HideBar /></PaletteButton>
              <PaletteRule />
              <PaletteButton aria-label="Zoom"><ZoomIn /></PaletteButton>
              <PaletteButton aria-label="Fit to view"><Fit /></PaletteButton>
              <PaletteButton aria-label="Signals"><SignalLines /></PaletteButton>
              <PaletteButton aria-label="Annotation"><Annotation /></PaletteButton>
              <PaletteButton aria-label="Image"><ImageIcon /></PaletteButton>
              <PaletteButton aria-label="Area"><Area /></PaletteButton>
              <PaletteGap />
              <PaletteButton aria-label="Screenshot"><Camera /></PaletteButton>
              <PaletteButton aria-label="Bookmarks"><Bookmark /></PaletteButton>
              <PaletteButton aria-label="Collapse palette"><Chevrons /></PaletteButton>
            </Palette>
            <Editor>
              <Crumbs>
                <CrumbInner>
                  <ModelIcon />
                  <CrumbName>Dataset_Diabetes2</CrumbName>
                  <svg width="14" height="24" viewBox="0 0 14 24"><path d="M0 0l14 12L0 24z" /></svg>
                  <DocFill />
                  <Arrow w={24} h={14} />
                </CrumbInner>
              </Crumbs>
              <CanvasRow>
                <Canvas>
                  <Subsystem $x={1837} $y={248}><SubsystemBox />Datset</Subsystem>
                  <Subsystem $x={2096} $y={250}><SubsystemBox />Target</Subsystem>
                  <FromColumn>
                    {tags.map((tag) => (
                      <FromRow key={tag}>
                        <Tag><TagShape /><span>{tag}</span></Tag>
                        <Wire length={150} />
                      </FromRow>
                    ))}
                  </FromColumn>
                  <Mux />
                  <Output><Wire length={209} /><FileBlock>Data.mat</FileBlock></Output>
                  <CanvasCorner><CornerBar $width={10} /><CornerBar $width={10} /><CornerBar $width={25} /></CanvasCorner>
                </Canvas>
                <ScrollTrack><ScrollThumb /></ScrollTrack>
              </CanvasRow>
            </Editor>
          </EditorRow>
        </Center>
        <RightRail><SideTab $length={268}>Property Inspector</SideTab></RightRail>
      </Workspace>

      <StatusBar>
        <span>Ready</span>
        <span>78%</span>
        <SolverLink href="#solver">FixedStepAuto</SolverLink>
      </StatusBar>

      <Taskbar>
        <Weather><Cloud /><Lines><span>26°C</span><Muted>Cloudy</Muted></Lines></Weather>
        <button aria-label="Start"><Windows /></button>
        <SearchPill><SearchGlass />Search the web</SearchPill>
        <Dock>
          {dock.map((d) => (
            <DockItem key={d.name} aria-label={d.name} $lit={d.lit}>
              {d.icon}
              {d.mark && <Indicator $color={d.mark} $wide={d.wide} />}
            </DockItem>
          ))}
        </Dock>
        <Tray>
          <TrayButton $left={0} aria-label="Show hidden icons"><ChevronUp /></TrayButton>
          <TrayButton $left={24} aria-label="OneDrive"><TrayCloud /></TrayButton>
          <TrayButton $left={39}><Lines $align="center"><span>ENG</span><span>IN</span></Lines></TrayButton>
          <TrayButton $left={49} aria-label="Wi-Fi"><Wifi /></TrayButton>
          <TrayButton $left={20} aria-label="Volume"><Speaker /></TrayButton>
          <TrayButton $left={20} aria-label="Battery"><Battery /></TrayButton>
          <Clock $left={0}><Lines $align="flex-end"><span>8:42 AM</span><span>11/16/2022</span></Lines><Count>2</Count></Clock>
        </Tray>
      </Taskbar>
    </Page>
  );
}
